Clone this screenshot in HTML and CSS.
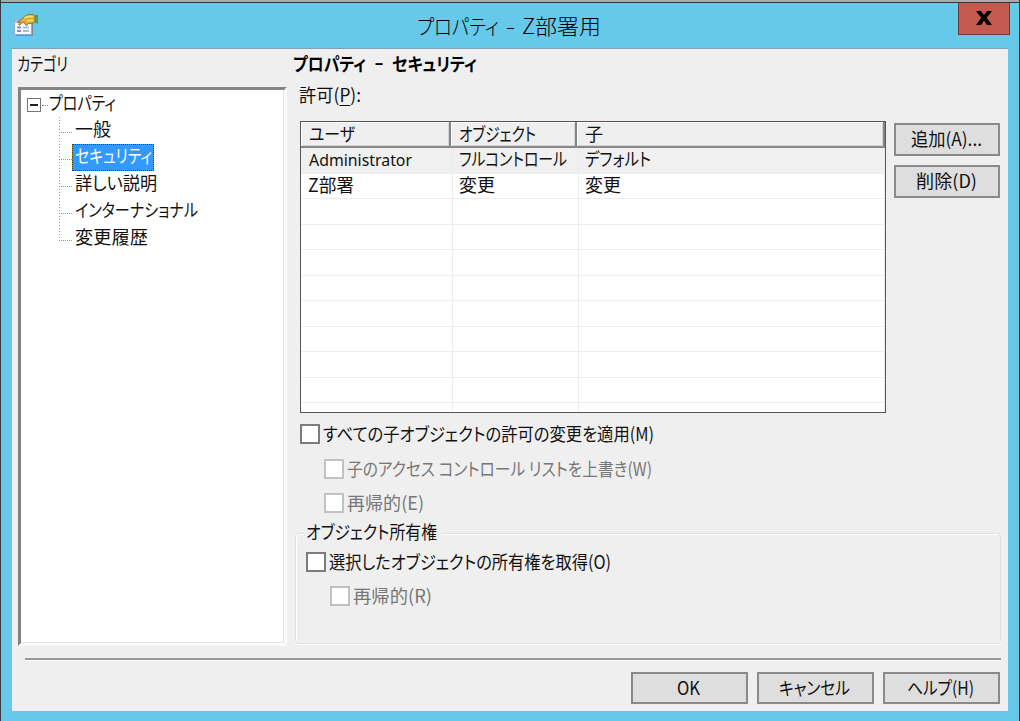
FILE: index.html
```html
<!DOCTYPE html>
<html lang="ja">
<head>
<meta charset="utf-8">
<title>プロパティ - Z部署用</title>
<link rel="stylesheet" href="styles.css">
</head>
<body>
<div class="window">
  <header class="titlebar">
    <svg class="app-icon" width="26" height="24" viewBox="0 0 26 24">
      <rect x="2" y="7" width="17" height="16" fill="#7f8a96"/>
      <rect x="0.500" y="6.500" width="17" height="15" fill="#f6f8ff" stroke="#9aa6cf"/>
      <path d="M1 7h5v3H1z" fill="#a9bdf0"/>
      <path d="M3 14.500h4M3 18h4" stroke="#7f90c8" stroke-width="1.800"/>
      <path d="M9 14.500h6M9 18h6" stroke="#aeb9d2" stroke-width="1.800"/>
      <path d="M20.500 2.500L24 1.500v9.500l-3.500-1.500z" fill="#4fa55c"/>
      <path d="M3.500 9L9 5L12 2.500L15 1.500h4l2 1.500v6l-3 1.500h-4l-1 2-2-1-1-2.500-3 1.500-1.500 2-1-1 2-3-2.500 1z" fill="#dfae35" stroke="#8c6a24" stroke-width=".8"/>
      <path d="M10 5.500l3-2h6M13 7.500h6" stroke="#ffe173" stroke-width="1.500" fill="none"/>
    </svg>
    <h1 class="title"><span class="t" data-w="82">プロパティ</span><span class="t" data-w="9">-</span><span class="t" data-w="79">Z部署用</span></h1>
    <button class="close" aria-label="閉じる"><svg width="18" height="16" viewBox="0 0 18 16"><path d="M1 1h5l3 4 3-4h5l-5.300 6.700L17 15h-5l-3-4.300L6 15H1l5.300-7.300z" fill="#000"/></svg></button>
  </header>
  <main class="client">
    <div class="upper">
      <aside class="side">
        <div class="side-label"><span class="t" data-w="51">カテゴリ</span></div>
        <div class="tree">
          <div class="root"><i class="expander"></i><i class="dots"></i><span class="t" data-w="67">プロパティ</span></div>
          <ul class="nodes">
            <li><span class="node"><span class="t" data-w="36">一般</span></span></li>
            <li><span class="node selected"><span class="t" data-w="77">セキュリティ</span></span></li>
            <li><span class="node"><span class="t" data-w="82">詳しい説明</span></span></li>
            <li><span class="node"><span class="t" data-w="123">インターナショナル</span></span></li>
            <li><span class="node"><span class="t" data-w="73">変更履歴</span></span></li>
          </ul>
        </div>
      </aside>
      <section class="panel">
        <h2 class="heading"><span class="t" data-w="73">プロパティ</span><span class="t" data-w="10">－</span><span class="t" data-w="85">セキュリティ</span></h2>
        <div class="perm-label"><span class="t" data-w="62">許可(<u>P</u>):</span></div>
        <div class="perm">
          <div class="table">
            <div class="thead">
              <div class="th"><span class="t" data-w="46">ユーザ</span></div>
              <div class="th"><span class="t" data-w="77">オブジェクト</span></div>
              <div class="th"><span class="t" data-w="18">子</span></div>
            </div>
            <div class="tr active">
              <div class="td"><span class="t latin" data-w="103">Administrator</span></div>
              <div class="td"><span class="t" data-w="108">フルコントロール</span></div>
              <div class="td"><span class="t" data-w="66">デフォルト</span></div>
            </div>
            <div class="tr">
              <div class="td"><span class="t" data-w="46">Z部署</span></div>
              <div class="td"><span class="t" data-w="36">変更</span></div>
              <div class="td"><span class="t" data-w="36">変更</span></div>
            </div>
            <div class="tr"><div class="td"></div><div class="td"></div><div class="td"></div></div>
            <div class="tr"><div class="td"></div><div class="td"></div><div class="td"></div></div>
            <div class="tr"><div class="td"></div><div class="td"></div><div class="td"></div></div>
            <div class="tr"><div class="td"></div><div class="td"></div><div class="td"></div></div>
            <div class="tr"><div class="td"></div><div class="td"></div><div class="td"></div></div>
            <div class="tr"><div class="td"></div><div class="td"></div><div class="td"></div></div>
            <div class="tr"><div class="td"></div><div class="td"></div><div class="td"></div></div>
            <div class="tr"><div class="td"></div><div class="td"></div><div class="td"></div></div>
            <div class="tr"><div class="td"></div><div class="td"></div><div class="td"></div></div>
          </div>
          <div class="actions">
            <button class="btn"><span class="t" data-w="71">追加(A)...</span></button>
            <button class="btn"><span class="t" data-w="61">削除(D)</span></button>
          </div>
        </div>
        <div class="options">
          <label class="check"><i class="box"></i><span class="t" data-w="331">すべての子オブジェクトの許可の変更を適用(M)</span></label>
          <label class="check sub disabled"><i class="box"></i><span class="t" data-w="305">子のアクセス コントロール リストを上書き(W)</span></label>
          <label class="check sub disabled"><i class="box"></i><span class="t" data-w="77">再帰的(E)</span></label>
        </div>
        <div class="owner" role="group">
          <div class="legend"><span class="t" data-w="131">オブジェクト所有権</span></div>
          <label class="check"><i class="box"></i><span class="t" data-w="282">選択したオブジェクトの所有権を取得(O)</span></label>
          <label class="check sub disabled"><i class="box"></i><span class="t" data-w="79">再帰的(R)</span></label>
        </div>
      </section>
    </div>
    <footer class="footer">
      <button class="btn"><span class="t" data-w="23">OK</span></button>
      <button class="btn"><span class="t" data-w="71">キャンセル</span></button>
      <button class="btn"><span class="t" data-w="67">ヘルプ(H)</span></button>
    </footer>
  </main>
</div>
<script src="fit.js"></script>
</body>
</html>
```

FILE: styles.css
```css
* { box-sizing: border-box; }
body {
  margin: 0;
  width: 1020px;
  height: 721px;
  overflow: hidden;
  color: #111;
  font: 18px/26px "Noto Sans CJK JP", sans-serif;
  font-feature-settings: "palt";
}
h1, h2, ul { margin: 0; padding: 0; font-weight: 400; font-size: inherit; }
button { padding: 0; font: inherit; font-feature-settings: inherit; color: inherit; }
.t { display: inline-block; white-space: nowrap; transform-origin: 0 50%; text-align: left; }
.t.latin { font-family: "Noto Sans", sans-serif; font-size: 17px; }
.t u { text-underline-offset: 3px; text-decoration-thickness: 1px; }

.window {
  width: 1020px;
  height: 721px;
  display: flex;
  flex-direction: column;
  padding: 0 11px 10px 11px;
  background: #66c9ea;
  border-left: 1px solid #343c42;
  border-right: 1px solid #263f4b;
  box-shadow: inset 0 2px #aaa, inset 0 3px #383838;
}
.titlebar { height: 48px; display: flex; padding-top: 3px; flex: none; }
.app-icon { margin: 10px 0 0 2px; width: 26px; flex: none; }
.title { flex: 1; display: flex; gap: 7px; padding: 7px 0 0 377px; font-size: 21px; line-height: 30px; color: #000; font-weight: 300; }
.close {
  width: 52px;
  height: 32px;
  margin-right: -2px;
  border: 1px solid #713b3b;
  border-top: 0;
  background: #c3594f;
  display: flex;
  align-items: center;
  justify-content: center;
}
.close svg { margin-top: -2px; }
.client { flex: 1; display: flex; flex-direction: column; background: #efefef; border-top: 1px solid #7f9fb4; }

.upper { display: flex; height: 609px; margin: 0 7px 0 6px; }
.side { width: 269px; margin-right: 8px; display: flex; flex-direction: column; }
.side-label { height: 38px; padding-top: 1px; margin-left: -1px; }
.tree {
  height: 559px;
  background: #fff;
  border: 3px solid;
  border-color: #858585 #fafafa #fafafa #808080;
  padding: 0 0 0 6px;
  box-shadow: inset -1px -1px #e4e4e4;
}
.root { display: flex; align-items: center; height: 27px; }
.root > .t { margin-top: -4px; }
.expander {
  width: 14px;
  height: 14px;
  margin-top: 3px;
  border: 1px solid #777;
  background: linear-gradient(#222, #222) 50% 50% / 8px 2px no-repeat;
}
.dots { width: 6px; margin: 4px 1px 0 1px; border-top: 1px dotted #888; }
.nodes { list-style: none; margin-left: 32px; }
.nodes li { height: 27px; display: flex; align-items: center; position: relative; }
.nodes li::before {
  content: "";
  position: absolute;
  left: 0;
  top: 0;
  width: 1px;
  height: 27px;
  background: repeating-linear-gradient(#999 0 1px, transparent 1px 3px);
}
.nodes li:last-child::before { height: 17px; }
.nodes li::after { content: ""; width: 13px; margin-top: 4px; border-top: 1px dotted #999; order: -1; }
.node { height: 27px; padding: 0 3px; line-height: 23px; }
.selected { padding-right: 2px; background: #3399ff; color: #fff; outline: 1px dotted #533c19; outline-offset: -1px; }

.panel { flex: 1; display: flex; flex-direction: column; }
.heading { display: flex; gap: 8px; height: 34px; padding-top: 1px; margin-left: -2px; font-weight: 700; color: #000; }
.perm-label { height: 39px; padding-left: 4px; margin-top: -2px; margin-bottom: 2px; }
.perm { display: flex; gap: 8px; padding-left: 5px; height: 291px; margin-top: -1px; flex: none; }
.table { width: 586px; height: 292px; border: 1px solid #555; background: #fff; overflow: hidden; }
.thead, .tr { display: grid; grid-template-columns: 150px 126px 1fr; }
.thead { height: 26px; border-bottom: 2px solid #888; background: #efefef; }
.th {
  padding-left: 8px;
  line-height: 22px;
  border-right: 2px solid #858585;
  box-shadow: inset 1px 1px #fff, inset -1px -1px #d5d5d5;
}
.tr { grid-template-columns: 152px 126px 1fr; height: 25.550px; border-bottom: 1px solid #ededed; }
.active { background: #f0f0f0; }
.td { padding-left: 6px; line-height: 21px; border-right: 1px solid #ededed; }
.td:first-child { padding-left: 7px; }
.active .td:first-child { padding-left: 8px; }
.actions { display: flex; flex-direction: column; gap: 9px; padding-top: 2px; }
.btn {
  width: 106px;
  height: 33px;
  border: 2px solid #8a8a8a;
  background: #dedede;
  display: flex;
  align-items: center;
  justify-content: center;
}
.btn > .t { margin: -3px 2px 0 0; }
.options { padding: 9px 0 0 5px; height: 116px; flex: none; display: flex; flex-direction: column; }
.check { display: flex; align-items: center; height: 26px; gap: 3px; margin-bottom: 8.500px; flex: none; }
.check > .t { margin-top: -2px; }
.box { width: 20px; height: 20px; border: 2px solid #7c7c7c; background: #fff; }
.sub { margin-left: 24px; }
.disabled { color: #777; }
.disabled .box { border-color: #bfc3c6; }
.owner {
  width: 706px;
  height: 111px;
  margin-top: 5px;
  padding-left: 10px;
  border: 1px solid #d8e1e6;
  border-radius: 4px;
  box-shadow: inset 1px 1px #fff, 0 1px #fff;
}
.legend { width: 138px; height: 26px; margin: -16px 0 5px -2px; padding-left: 2px; background: #efefef; }
.owner .sub { margin-top: -1px; }

.footer {
  flex: 1;
  display: flex;
  justify-content: flex-end;
  gap: 9px;
  margin: 0 7px 0 13px;
  padding: 12px 1px 0 0;
  border-top: 2px solid #999;
  box-shadow: inset 0 1px #fafafa;
}
.footer .btn { width: 117px; height: 32px; }
```

FILE: fit.js
```javascript
// Condense each label horizontally to its dialog-font width (data-w, in px).
document.querySelectorAll(".t").forEach(function (el) {
  var natural = el.getBoundingClientRect().width;
  var target = Number(el.dataset.w);
  el.style.width = target + "px";
  var inner = document.createElement("span");
  inner.className = "t";
  while (el.firstChild) inner.appendChild(el.firstChild);
  inner.style.transform = "scaleX(" + target / natural + ")";
  el.appendChild(inner);
});
```
